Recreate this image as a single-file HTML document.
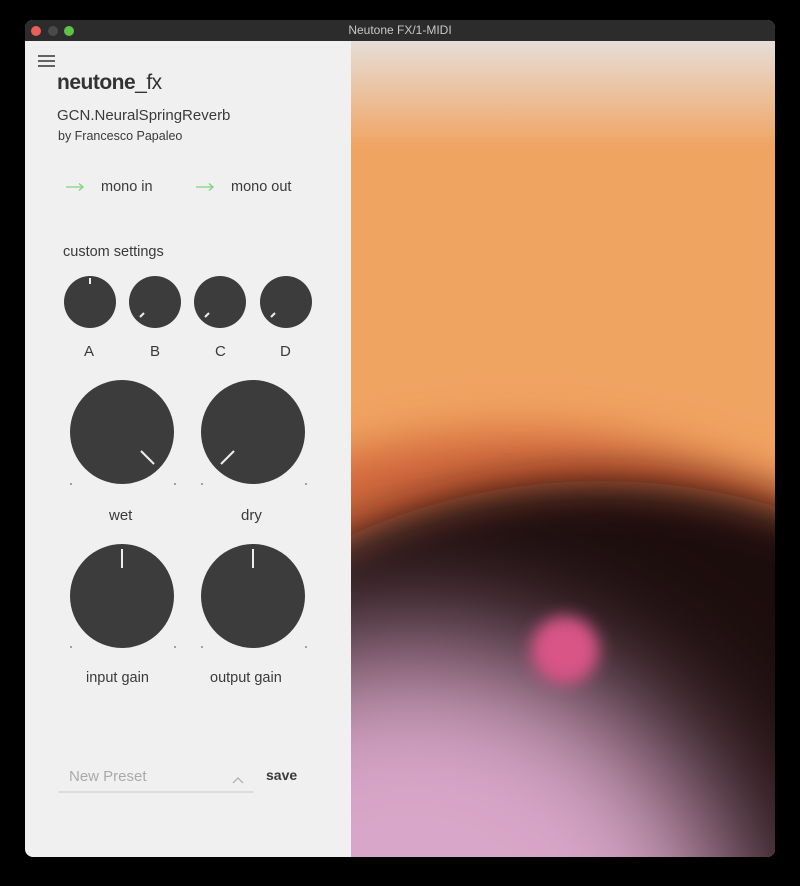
<!DOCTYPE html>
<html><head><meta charset="utf-8"><style>
html,body{margin:0;width:800px;height:886px;overflow:hidden}
body{background:#000;position:relative;font-family:"Liberation Sans",sans-serif}
.win{position:absolute;left:25px;top:20px;width:750px;height:837px;border-radius:8px;overflow:hidden;background:#f0f0f0}
.tb{position:absolute;left:0;top:0;width:750px;height:21px;background:#2c2c2c;color:#c8c8c8;font-size:12px;text-align:center;line-height:21px}
.dot{position:absolute;top:6px;width:10px;height:10px;border-radius:50%}
.t{position:absolute;color:#3a3a3a;white-space:nowrap}
</style></head><body>
<div class="win">
<div class="tb">Neutone FX/1-MIDI
<div class="dot" style="left:6px;background:#ec5f57"></div>
<div class="dot" style="left:23px;background:#4a4a4a"></div>
<div class="dot" style="left:39px;background:#5fc148"></div></div>
<svg style="position:absolute;left:326px;top:21px;overflow:hidden" width="424" height="816">
<defs>
<linearGradient id="g" x1="0" y1="0" x2="0" y2="1"><stop offset="0" stop-color="#e6ded8"/><stop offset="0.13" stop-color="#f0a462"/><stop offset="1" stop-color="#f0a462"/></linearGradient>
<filter id="b1" x="-50%" y="-50%" width="200%" height="200%"><feGaussianBlur stdDeviation="22"/></filter>
<filter id="b2" x="-50%" y="-50%" width="200%" height="200%"><feGaussianBlur stdDeviation="70"/></filter>
<filter id="b3" x="-50%" y="-50%" width="200%" height="200%"><feGaussianBlur stdDeviation="8"/></filter>
</defs>
<rect width="424" height="816" fill="url(#g)"/>
<ellipse cx="170" cy="870" rx="560" ry="480" fill="#d2663a" filter="url(#b1)"/>
<ellipse cx="250" cy="880" rx="520" ry="440" fill="#1c0c0a" filter="url(#b1)"/>
<ellipse cx="60" cy="930" rx="340" ry="330" fill="#d8a6c8" filter="url(#b2)"/>
<circle cx="214" cy="609" r="34" fill="#d85586" filter="url(#b3)"/>
</svg>
<svg style="position:absolute;left:13px;top:35px" width="18" height="14"><g stroke="#333" stroke-width="1.6"><line x1="0" y1="1" x2="17" y2="1"/><line x1="0" y1="6" x2="17" y2="6"/><line x1="0" y1="11" x2="17" y2="11"/></g></svg>
<div class="t" style="left:32px;top:51px;font-size:21px;font-weight:bold;letter-spacing:-0.5px;color:#333">neutone<span style="font-weight:normal">_fx</span></div>
<div class="t" style="left:32px;top:87px;font-size:15px">GCN.NeuralSpringReverb</div>
<div class="t" style="left:33px;top:109px;font-size:12.5px">by Francesco Papaleo</div>
<div class="t" style="left:76px;top:159px;font-size:14.5px">mono in</div>
<div class="t" style="left:206px;top:159px;font-size:14.5px">mono out</div>
<div class="t" style="left:38px;top:224px;font-size:14.5px">custom settings</div>
<svg style="position:absolute;left:0;top:0" width="326" height="837">
<g stroke="#7fd47f" stroke-width="1.3" fill="none"><line x1="41" y1="167" x2="58" y2="167"/><polyline points="54,163.5 58,167 54,170.5"/><line x1="171" y1="167" x2="188" y2="167"/><polyline points="184,163.5 188,167 184,170.5"/></g>
<g fill="#3c3c3c">
<circle cx="65" cy="282" r="26"/><circle cx="130" cy="282" r="26"/><circle cx="195" cy="282" r="26"/><circle cx="261" cy="282" r="26"/>
<circle cx="97" cy="412" r="52"/><circle cx="228" cy="412" r="52"/>
<circle cx="97" cy="576" r="52"/><circle cx="228" cy="576" r="52"/>
</g>
<g stroke="#eee" stroke-width="2">
<line x1="65" y1="258" x2="65" y2="264"/>
<line x1="115" y1="297" x2="119" y2="293"/><line x1="180" y1="297" x2="184" y2="293"/><line x1="246" y1="297" x2="250" y2="293"/>
<line x1="116" y1="431" x2="129" y2="444"/><line x1="209" y1="431" x2="196" y2="444"/>
<line x1="97" y1="529" x2="97" y2="548"/><line x1="228" y1="529" x2="228" y2="548"/>
</g>
<g fill="#888"><circle cx="46" cy="464" r="1"/><circle cx="150" cy="464" r="1"/><circle cx="177" cy="464" r="1"/><circle cx="281" cy="464" r="1"/>
<circle cx="46" cy="627" r="1"/><circle cx="150" cy="627" r="1"/><circle cx="177" cy="627" r="1"/><circle cx="281" cy="627" r="1"/></g>
<polyline points="208,763 213,758 218,763" fill="none" stroke="#aaa" stroke-width="1.2"/>
<line x1="33" y1="772" x2="229" y2="772" stroke="#ccc" stroke-width="1"/>
</svg>
<div class="t" style="left:59px;top:323px;font-size:15px">A</div>
<div class="t" style="left:125px;top:323px;font-size:15px">B</div>
<div class="t" style="left:190px;top:323px;font-size:15px">C</div>
<div class="t" style="left:255px;top:323px;font-size:15px">D</div>
<div class="t" style="left:84px;top:487px;font-size:15px">wet</div>
<div class="t" style="left:216px;top:487px;font-size:15px">dry</div>
<div class="t" style="left:61px;top:650px;font-size:14.5px">input gain</div>
<div class="t" style="left:185px;top:650px;font-size:14.5px">output gain</div>
<div class="t" style="left:44px;top:748px;font-size:15px;color:#aaa">New Preset</div>
<div class="t" style="left:241px;top:747px;font-size:14px;font-weight:bold">save</div>
</div>
</body></html>
